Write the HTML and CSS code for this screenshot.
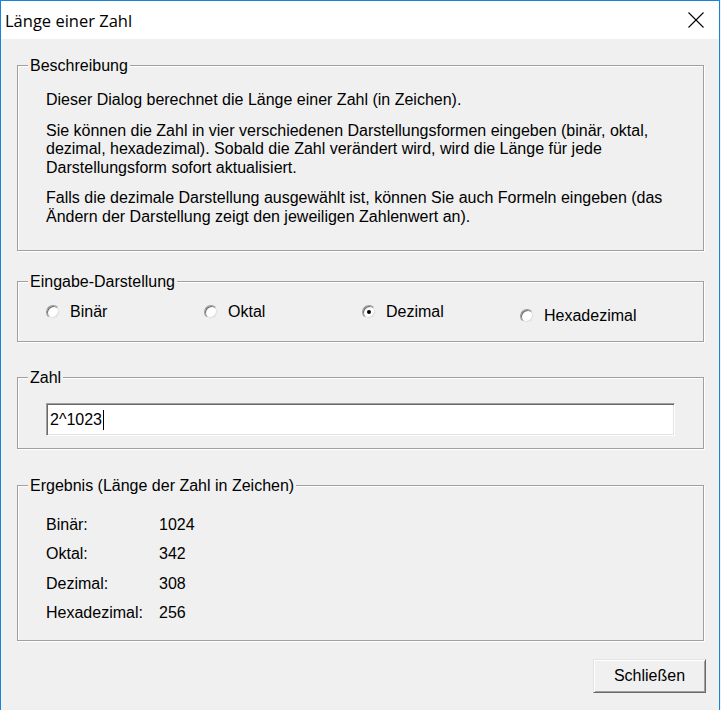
FILE: index.html
```html
<!DOCTYPE html>
<html lang="de">
<head>
<meta charset="utf-8">
<title>Länge einer Zahl</title>
<link rel="stylesheet" href="styles.css">
</head>
<body>
<div class="window">
  <div class="titlebar">
    <span class="title">Länge einer Zahl</span>
    <span class="close" aria-label="Schließen">
      <svg width="16" height="16" viewBox="0 0 16 16"><path d="M0.5 0.5 L15.5 15.5 M15.5 0.5 L0.5 15.5" stroke="#000" stroke-width="1.1" fill="none"/></svg>
    </span>
  </div>
  <div class="client">
    <section class="group g-desc">
      <span class="group-label">Beschreibung</span>
      <p>Dieser Dialog berechnet die Länge einer Zahl (in Zeichen).</p>
      <p>Sie können die Zahl in vier verschiedenen Darstellungsformen eingeben (binär, oktal,<br>dezimal, hexadezimal). Sobald die Zahl verändert wird, wird die Länge für jede<br>Darstellungsform sofort aktualisiert.</p>
      <p>Falls die dezimale Darstellung ausgewählt ist, können Sie auch Formeln eingeben (das<br>Ändern der Darstellung zeigt den jeweiligen Zahlenwert an).</p>
    </section>
    <section class="group g-input">
      <span class="group-label">Eingabe-Darstellung</span>
      <div class="radios">
        <div class="radio-item"><span class="radio"></span><span>Binär</span></div>
        <div class="radio-item"><span class="radio"></span><span>Oktal</span></div>
        <div class="radio-item"><span class="radio checked"></span><span>Dezimal</span></div>
        <div class="radio-item low"><span class="radio"></span><span>Hexadezimal</span></div>
      </div>
    </section>
    <section class="group g-number">
      <span class="group-label">Zahl</span>
      <div class="field">2^1023<span class="caret"></span></div>
    </section>
    <section class="group g-result">
      <span class="group-label">Ergebnis (Länge der Zahl in Zeichen)</span>
      <div class="results">
        <span>Binär:</span><span>1024</span>
        <span>Oktal:</span><span>342</span>
        <span>Dezimal:</span><span>308</span>
        <span>Hexadezimal:</span><span>256</span>
      </div>
    </section>
    <div class="actions">
      <button class="btn" type="button">Schließen</button>
    </div>
  </div>
</div>
</body>
</html>
```

FILE: styles.css
```css
html, body {
  margin: 0;
  padding: 0;
  background: #f0f0f0;
}

.window {
  box-sizing: border-box;
  width: 720px;
  height: 710px;
  border: 1px solid #1883d7;
  border-bottom: none;
  background: #f0f0f0;
  display: flex;
  flex-direction: column;
  font-family: "Liberation Sans", Arial, sans-serif;
  font-size: 16px;
  color: #000;
}

.titlebar {
  height: 38px;
  flex: none;
  background: #fff;
  display: flex;
  align-items: center;
  padding-left: 4px;
}

.title {
  font-family: "Open Sans", "Noto Sans", sans-serif;
  font-size: 16.5px;
  color: #000;
}

.close {
  margin-left: auto;
  margin-right: 15px;
  width: 16px;
  height: 16px;
  display: flex;
}

.client {
  flex: 1;
  display: flex;
  flex-direction: column;
  padding: 26px 13px 0 16px;
}

.group {
  position: relative;
  box-sizing: border-box;
  margin-right: 2px;
  border: 1px solid #a0a0a0;
  box-shadow: 1px 1px 0 #fff, inset 1px 1px 0 #fff;
}

.group-label {
  position: absolute;
  top: -9px;
  left: 10px;
  padding: 0 2px;
  line-height: 18px;
  background: #f0f0f0;
  white-space: nowrap;
}

.g-desc {
  height: 186px;
  padding: 25px 10px 0 28px;
}

.g-desc p {
  margin: 0 0 12px;
  line-height: 18.5px;
  white-space: nowrap;
}

.g-input {
  height: 61px;
  margin-top: 30px;
  padding: 21px 0 0 28px;
}

.radios {
  display: flex;
  align-items: flex-start;
}

.radio-item {
  width: 158px;
  flex: none;
  display: flex;
  align-items: center;
  gap: 10px;
  line-height: 18px;
}

.radio-item.low {
  margin-top: 4px;
}

.radio {
  flex: none;
  box-sizing: border-box;
  width: 14px;
  height: 14px;
  border-radius: 50%;
  border: 1px solid;
  border-color: #9a9a9a #ececec #ececec #9a9a9a;
  background: #fff;
  box-shadow: inset 1px 1px 0 #6c6c6c, inset -1px -1px 0 #dcdcdc;
  display: flex;
  align-items: center;
  justify-content: center;
}

.radio.checked::after {
  content: "";
  width: 4px;
  height: 4px;
  border-radius: 50%;
  background: #000;
}

.g-number {
  height: 72px;
  margin-top: 35px;
  padding: 25px 0 0 28px;
}

.field {
  box-sizing: border-box;
  width: 629px;
  height: 33px;
  background: #fff;
  border: 1px solid;
  border-color: #a0a0a0 #fff #fff #a0a0a0;
  box-shadow: inset 1px 1px 0 #696969, inset -1px -1px 0 #e3e3e3;
  padding-left: 3px;
  display: flex;
  align-items: center;
}

.caret {
  display: inline-block;
  width: 1px;
  height: 20px;
  margin-left: 1px;
  background: #000;
}

.g-result {
  height: 156px;
  margin-top: 36px;
  padding: 24px 0 0 28px;
}

.results {
  display: grid;
  grid-template-columns: 113px auto;
  grid-auto-rows: 29.5px;
  align-items: center;
  justify-content: start;
  line-height: 18px;
}

.actions {
  margin-top: 18px;
  display: flex;
  justify-content: flex-end;
}

.btn {
  box-sizing: border-box;
  width: 113px;
  height: 34px;
  margin: 0;
  padding: 0;
  font-family: "Liberation Sans", Arial, sans-serif;
  font-size: 16px;
  color: #000;
  background: #f0f0f0;
  border: 1px solid;
  border-color: #e3e3e3 #696969 #696969 #e3e3e3;
  box-shadow: inset 1px 1px 0 #fff, inset -1px -1px 0 #a0a0a0;
  border-radius: 0;
}
```
